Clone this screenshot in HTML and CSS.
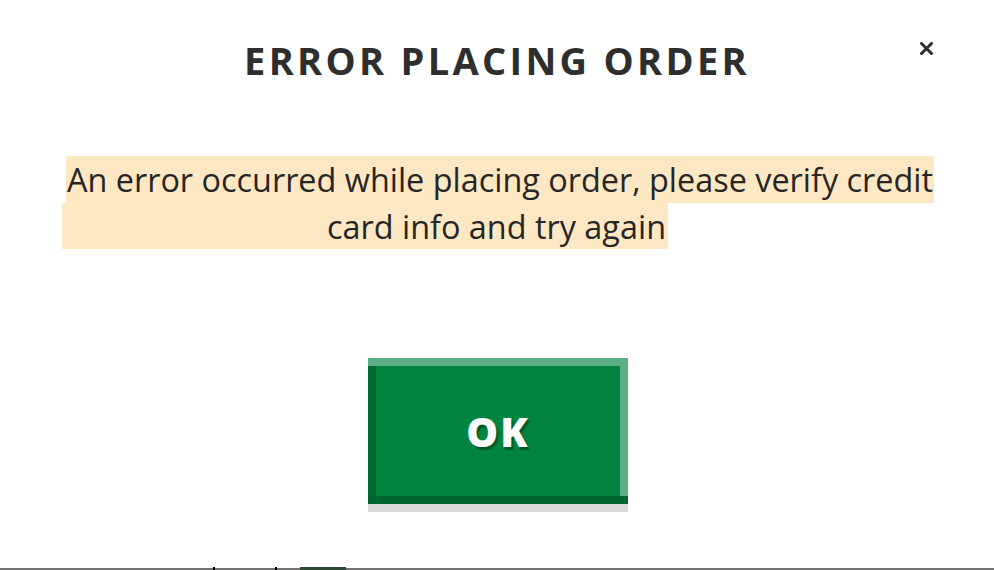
FILE: index.html
```html
<!DOCTYPE html>
<html>
<head>
<meta charset="utf-8">
<link rel="stylesheet" href="styles.css">
</head>
<body>
<div class="modal">
  <div class="header">
    <h1 class="title">ERROR PLACING ORDER</h1>
    <button class="close" aria-label="Close">
      <svg width="13" height="13" viewBox="0 0 13 13"><path d="M1.5 1.5 L11.5 11.5 M11.5 1.5 L1.5 11.5" stroke="#2e2e2e" stroke-width="3" stroke-linecap="square"/></svg>
    </button>
  </div>
  <div class="message">
    <span class="line1">An error occurred while placing order, please verify credit</span>
    <span class="line2">card info and try again</span>
  </div>
  <div class="actions">
    <button class="ok">OK</button>
  </div>
</div>
<div class="page-edge">
  <span class="tick t1"></span><span class="tick t2"></span><span class="leaf"></span>
</div>
</body>
</html>
```
FILE: styles.css
```css
html, body {
  margin: 0;
  padding: 0;
  background: #ffffff;
  height: 100%;
  overflow: hidden;
}
body {
  font-family: "Open Sans", "Noto Sans", sans-serif;
  color: #2b2b2b;
  display: flex;
  flex-direction: column;
}
.modal {
  flex: 1;
  display: flex;
  flex-direction: column;
}
.header {
  position: relative;
  padding-top: 34px;
  height: 62px;
  text-align: center;
}
.title {
  margin: 0;
  font-size: 38px;
  font-weight: 700;
  letter-spacing: 3.3px;
  line-height: 52px;
  color: #2e2e2e;
}
.close {
  position: absolute;
  left: 920px;
  top: 42px;
  border: none;
  background: none;
  padding: 0;
  line-height: 0;
  cursor: pointer;
}
.message {
  margin-top: 60px;
  display: flex;
  flex-direction: column;
  align-items: flex-start;
  font-size: 32.4px;
  line-height: 46.5px;
  color: #262626;
}
.line1 {
  margin-left: 66px;
  width: 868px;
  text-align: center;
  background: #fee7c3;
}
.line2 {
  margin-left: 62px;
  width: 604px;
  padding-right: 2px;
  text-align: right;
  background: #fee7c3;
}
.actions {
  margin-top: 109px;
  display: flex;
  justify-content: center;
  padding-left: 2px;
}
.ok {
  width: 260px;
  height: 146px;
  box-sizing: border-box;
  border: none;
  background: #00843f;
  box-shadow:
    inset 0 8px 0 #5bae85,
    inset 0 -8px 0 #00652f,
    inset -8px 0 0 #5bae85,
    inset 8px 0 0 #006a32,
    0 8px 0 #d9d9d9;
  color: #ffffff;
  font-family: "Open Sans", sans-serif;
  font-size: 40px;
  font-weight: 800;
  letter-spacing: 2px;
  text-shadow: 2px 3px 1px rgba(0, 60, 25, 0.6);
  padding: 0;
  cursor: pointer;
}
.page-edge {
  height: 2px;
  background: #727272;
  position: relative;
}
.tick {
  position: absolute;
  bottom: 0;
  width: 2px;
  height: 3px;
  background: #000;
}
.t1 { left: 213px; }
.t2 { left: 275px; }
.leaf {
  position: absolute;
  bottom: 0;
  left: 300px;
  width: 46px;
  height: 3px;
  background: #2e4a36;
}
```
